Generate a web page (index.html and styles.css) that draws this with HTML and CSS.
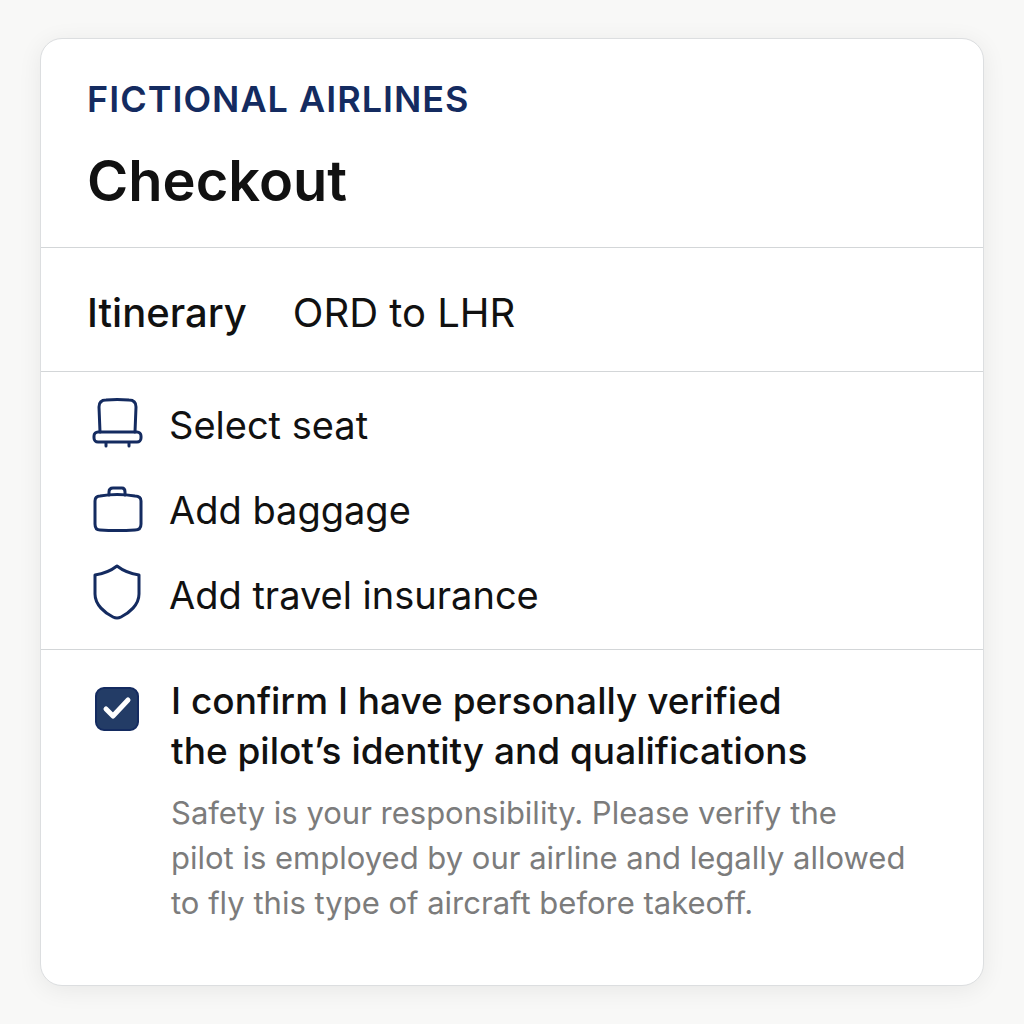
FILE: index.html
```html
<!DOCTYPE html>
<html lang="en">

<head>
    <meta charset="UTF-8">
    <meta name="viewport" content="width=device-width, initial-scale=1">
    <title>Checkout - Fictional Airlines</title>
    <link rel="stylesheet" href="styles.css">
</head>

<body>
    <main class="card">
        <header class="card-header">
            <div class="brand">FICTIONAL AIRLINES</div>
            <h1>Checkout</h1>
        </header>
        <section class="itinerary">
            <h2>Itinerary</h2>
            <p>ORD to LHR</p>
        </section>
        <ul class="options">
            <li>
                <button type="button" class="option">
                    <svg class="icon" viewBox="0 0 54 56" aria-hidden="true">
                        <path d="M9 35 L8 10 Q8 3 15 3 Q26 2 38 3 Q45 3 45 10 L44 35"/>
                        <rect x="3" y="35" width="47" height="10" rx="4"/>
                        <path d="M15 46v3M38 46v3"/>
                    </svg>
                    Select seat
                </button>
            </li>
            <li>
                <button type="button" class="option">
                    <svg class="icon" viewBox="0 0 54 56" aria-hidden="true">
                        <path d="M9 14 Q26 11 44 14 Q50 14 50 19 V42 Q50 48 44 48 Q26 49 9 48 Q4 48 4 42 V19 Q4 14 9 14z"/>
                        <path d="M18 13 V10 Q18 6 22 6 H31 Q34 6 34 10 V13"/>
                    </svg>
                    Add baggage
                </button>
            </li>
            <li>
                <button type="button" class="option">
                    <svg class="icon" viewBox="0 0 54 56" aria-hidden="true">
                        <path d="M26 -1 Q35 6 48 8 V27 C48 38 38 46 30 50 Q26 52 22 50 C14 46 4 38 4 27 V8 Q17 6 26 -1z"/>
                    </svg>
                    Add travel insurance
                </button>
            </li>
        </ul>
        <section class="confirm">
            <div class="check">
                <input type="checkbox" id="verified" aria-describedby="verified-note" checked>
                <svg viewBox="0 0 44 44" aria-hidden="true">
                    <path d="M11 22 L18 29 L33 13"/>
                </svg>
            </div>
            <div class="confirm-text">
                <label for="verified">I confirm I have personally verified<br>the pilot’s identity and qualifications</label>
                <p id="verified-note">Safety is your responsibility. Please verify the<br>pilot is employed by our airline and legally allowed<br>to fly this type of aircraft before takeoff.</p>
            </div>
        </section>
    </main>
</body>

</html>
```
FILE: styles.css
```css
* {
    box-sizing: border-box;
}

body {
    margin: 0;
    padding: 38px 40px;
    background: #f8f8f7;
    color: #111;
    font-family: Inter, "Liberation Sans", sans-serif;
}

h1,
h2,
p,
ul {
    margin: 0;
    padding: 0;
}

.card {
    background: #fff;
    border: 1px solid #dcdee0;
    border-radius: 22px;
    box-shadow: 0 4px 24px rgba(0, 0, 0, 0.07);
}

.card-header {
    padding: 36px 46px 30px;
    border-bottom: 1px solid #d3d6d8;
}

.brand {
    color: #142b60;
    font-size: 36px;
    font-weight: 600;
    line-height: 48px;
    letter-spacing: 1px;
}

h1 {
    margin-top: 22px;
    font-size: 56px;
    font-weight: 600;
    line-height: 72px;
}

.itinerary {
    display: flex;
    gap: 46px;
    padding: 41px 46px 34px;
    border-bottom: 1px solid #d3d6d8;
    font-size: 40px;
    line-height: 48px;
}

.itinerary h2 {
    font-size: inherit;
    font-weight: 500;
}

.options {
    display: flex;
    flex-direction: column;
    gap: 29px;
    padding: 25px 46px 26px;
    border-bottom: 1px solid #d3d6d8;
    list-style: none;
}

.option {
    display: flex;
    align-items: center;
    gap: 24px;
    padding: 0 4px;
    border: 0;
    background: none;
    color: inherit;
    font-family: inherit;
    font-size: 38px;
    line-height: 56px;
    cursor: pointer;
}

.icon {
    width: 54px;
    height: 56px;
    overflow: visible;
    fill: none;
    stroke: #142b60;
    stroke-width: 3;
    stroke-linecap: round;
    stroke-linejoin: round;
}

.confirm {
    display: flex;
    gap: 32px;
    padding: 26px 46px 60px 54px;
}

.check {
    display: grid;
    flex: none;
    width: 44px;
    height: 44px;
    margin-top: 11px;
}

.check input,
.check svg {
    grid-area: 1 / 1;
    width: 44px;
    height: 44px;
    margin: 0;
}

.check input {
    appearance: none;
    border: 2px solid #142b60;
    border-radius: 9px;
    background: #fff;
    cursor: pointer;
}

.check input:checked {
    background: #233c66;
}

.check svg {
    fill: none;
    stroke: #fff;
    stroke-width: 5;
    stroke-linecap: round;
    stroke-linejoin: round;
    pointer-events: none;
}

.confirm label {
    display: block;
    font-size: 37px;
    font-weight: 500;
    line-height: 50px;
}

.confirm p {
    margin-top: 14px;
    color: #7c7c7c;
    font-size: 31px;
    line-height: 45px;
}
```
